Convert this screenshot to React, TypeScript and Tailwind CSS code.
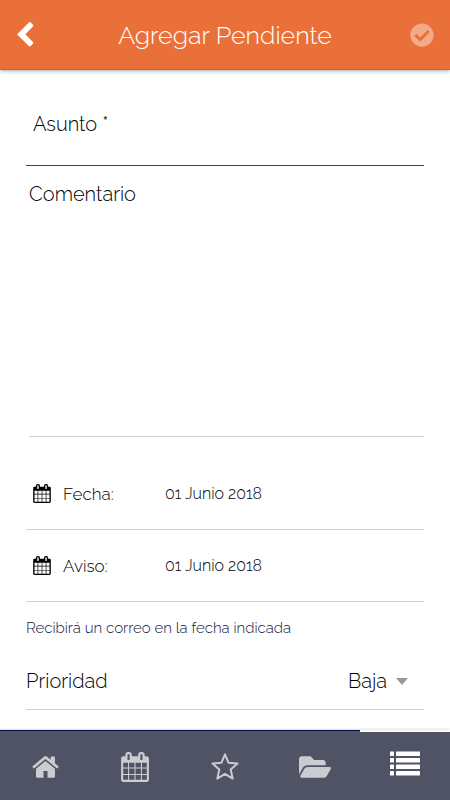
import { useState } from "react";
import { FaCheckCircle, FaFolderOpen } from "react-icons/fa";

type IconProps = { className?: string };

function ChevronIcon({ className }: IconProps) {
  return (
    <svg viewBox="0 0 17 25" className={className} fill="currentColor" aria-hidden="true">
      <path d="M11.9.5a1.300 1.300 0 0 1 1.800 0l2.200 2.100a1.300 1.300 0 0 1 0 1.800L8.400 12.300l7.500 7.700a1.300 1.300 0 0 1 0 1.800l-2.200 2.200a1.300 1.300 0 0 1-1.800 0L.9 13.200a1.300 1.300 0 0 1 0-1.800Z" />
    </svg>
  );
}

function CalendarIcon({ className }: IconProps) {
  return (
    <svg viewBox="0 0 1664 1792" className={className} fill="currentColor" aria-hidden="true">
      <path d="M128 1664h288v-288h-288v288zm352 0h320v-288h-320v288zm-352-352h288v-320h-288v320zm352 0h320v-320h-320v320zm-352-384h288v-288h-288v288zm736 736h320v-288h-320v288zm-384-736h320v-288h-320v288zm768 736h288v-288h-288v288zm-384-352h320v-320h-320v320zm-352-864v-288q0-13-9.500-22.500t-22.500-9.500h-64q-13 0-22.500 9.500t-9.500 22.500v288q0 13 9.500 22.500t22.500 9.500h64q13 0 22.500-9.500t9.500-22.500zm736 864h288v-320h-288v320zm-384-384h320v-288h-320v288zm384 0h288v-288h-288v288zm32-480v-288q0-13-9.500-22.500t-22.500-9.500h-64q-13 0-22.500 9.500t-9.500 22.500v288q0 13 9.500 22.500t22.500 9.500h64q13 0 22.500-9.500t9.500-22.500zm384-64v1280q0 52-38 90t-90 38h-1408q-52 0-90-38t-38-90v-1280q0-52 38-90t90-38h128v-96q0-66 47-113t113-47h64q66 0 113 47t47 113v96h384v-96q0-66 47-113t113-47h64q66 0 113 47t47 113v96h128q52 0 90 38t38 90z" />
    </svg>
  );
}

function HomeIcon({ className }: IconProps) {
  return (
    <svg viewBox="0 0 27 22" className={className} fill="currentColor" aria-hidden="true">
      <path d="M13.500 4.900 23 12.700v7.800a1.200 1.200 0 0 1-1.200 1.200h-6.300v-6.600h-4v6.600H5.200A1.200 1.200 0 0 1 4 20.500v-7.800Z" />
      <path d="M12.200.6a2 2 0 0 1 2.600 0L18.700 3.800V1a.6.6 0 0 1 .6-.6h3a.6.6 0 0 1 .6.6v6.300l3.500 2.900a.6.6 0 0 1 .1.800l-.9 1.100a.6.6 0 0 1-.9.100L13.500 3.100 2.300 12.200a.6.6 0 0 1-.9-.1l-.9-1.100a.6.6 0 0 1 .1-.8Z" />
    </svg>
  );
}

function StarIcon({ className }: IconProps) {
  return (
    <svg viewBox="0 0 28 28" className={className} fill="none" stroke="currentColor" strokeWidth="2" strokeLinejoin="round" aria-hidden="true">
      <path d="m14 1.300 3.500 8.400 9 .8-6.800 6L21.700 25.600 14 20.900 6.300 25.600l2-9.100-6.800-6 9-.8Z" />
    </svg>
  );
}

function ListIcon({ className }: IconProps) {
  return (
    <svg viewBox="0 0 32 26" className={className} fill="currentColor" aria-hidden="true">
      {[0.500, 7, 13.500, 20].map((y) => (
        <g key={y}>
          <rect x="1" y={y} width="4" height="4.500" rx=".4" />
          <rect x="7" y={y} width="24" height="4.500" rx=".4" />
        </g>
      ))}
    </svg>
  );
}

const dates = [
  { id: "fecha", label: "Fecha:", value: "01 Junio 2018" },
  { id: "aviso", label: "Aviso:", value: "01 Junio 2018" },
];

const tabs = [
  { name: "Inicio", icon: <HomeIcon className="h-[22px] w-[27px]" /> },
  { name: "Calendario", icon: <CalendarIcon className="h-[30px] w-7" /> },
  { name: "Favoritos", icon: <StarIcon className="size-7" /> },
  { name: "Carpetas", icon: <FaFolderOpen className="size-8" /> },
  { name: "Pendientes", icon: <ListIcon className="h-[26px] w-8" /> },
];

export default function App() {
  const [activeTab, setActiveTab] = useState("Pendientes");

  return (
    <div className="flex min-h-screen flex-col bg-white font-[Raleway,Lato,sans-serif] font-light text-black">
      {/* Header */}
      <header className="flex h-[70px] items-center justify-between border-b border-[#df6010] bg-[#e97139] px-4 text-white shadow-[0_1px_4px_rgba(0,0,0,0.35)]">
        <button type="button" aria-label="Volver" className="flex w-6 items-center pl-px">
          <ChevronIcon className="h-[25px] w-[17px]" />
        </button>
        <h1 className="text-[25px] leading-8">Agregar Pendiente</h1>
        <button type="button" aria-label="Guardar" className="flex w-6 items-center text-[#f3aa88]">
          <FaCheckCircle className="size-6" />
        </button>
      </header>

      {/* Form */}
      <form className="flex flex-col px-[26px] pt-10" onSubmit={(e) => e.preventDefault()}>
        <div className="flex flex-col border-b border-[#e30000]">
          <label htmlFor="asunto" className="px-[7px] text-[20px] leading-7">
            Asunto *
          </label>
          <input id="asunto" type="text" required className="h-[27px] w-full px-[7px] text-[20px] outline-none" />
        </div>

        <div className="ml-[3px] flex flex-col border-b border-[#d0d0d0] pt-[14px]">
          <label htmlFor="comentario" className="text-[20px] leading-7">
            Comentario
          </label>
          <textarea id="comentario" className="h-[228px] w-full resize-none text-[20px] outline-none" />
        </div>

        <div className="pt-[21px]">
          {dates.map((d) => (
            <div key={d.id} className="flex h-[72px] items-center border-b border-[#d0d0d0] px-[7px]">
              <CalendarIcon className="mr-3 h-[19px] w-[18px]" />
              <label htmlFor={d.id} className="w-[102px] text-[17px] leading-6">
                {d.label}
              </label>
              <input
                id={d.id}
                type="text"
                defaultValue={d.value}
                className="min-w-0 flex-1 text-[16px] leading-6 outline-none"
              />
            </div>
          ))}
        </div>

        <p className="pt-[14px] text-[15px] leading-6 text-[#12163f]">
          Recibirá un correo en la fecha indicada
        </p>

        <div className="mt-[13px] flex h-[57px] items-center justify-between border-b border-[#d0d0d0] pr-4">
          <label htmlFor="prioridad" className="text-[20px] leading-7">
            Prioridad
          </label>
          <div className="relative flex items-center">
            <select id="prioridad" className="w-[60px] appearance-none bg-transparent text-[20px] leading-7 outline-none">
              <option>Baja</option>
              <option>Media</option>
              <option>Alta</option>
            </select>
            <svg viewBox="0 0 12 7" className="pointer-events-none absolute right-0 h-[7px] w-3 fill-[#999999]" aria-hidden="true">
              <path d="M0 0h12L6 7Z" />
            </svg>
          </div>
        </div>
      </form>

      {/* Bottom tabs */}
      <nav className="mt-auto flex h-[70px] bg-[#505364] shadow-[0_-1px_2px_rgba(0,0,0,0.12)]">
        {tabs.map((tab) => (
          <button
            key={tab.name}
            type="button"
            aria-label={tab.name}
            onClick={() => setActiveTab(tab.name)}
            className={`flex flex-1 items-center justify-center ${
              activeTab === tab.name
                ? "border-t-2 border-white pb-1 text-white"
                : "border-t border-[#00094b] pt-[2px] text-[#cbccd1]"
            }`}
          >
            {tab.icon}
          </button>
        ))}
      </nav>
    </div>
  );
}
